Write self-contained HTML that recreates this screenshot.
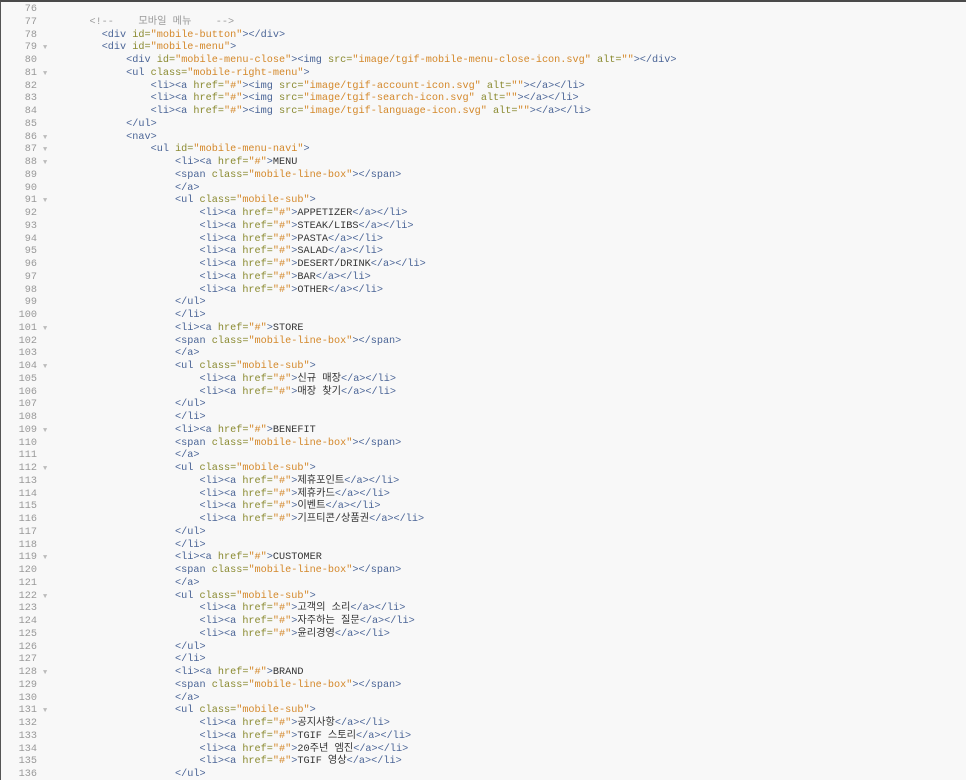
<!DOCTYPE html>
<html><head><meta charset="utf-8"><style>
html,body{margin:0;padding:0;background:#f8f8f8;width:966px;height:780px;overflow:hidden}
body{border-top:2px solid #4a4a4a;border-left:1px solid #555;box-sizing:border-box;position:relative}
.w{position:absolute;left:0;top:2px}
.l{position:relative;height:12.75px;line-height:12.75px;font-family:"Liberation Mono","Noto Sans CJK KR",monospace;font-size:10.2px;white-space:pre;color:#333;overflow:visible}
.n{position:absolute;left:0;width:36px;text-align:right;color:#999}
.f{position:absolute;left:42px;color:#bbb;font-size:7px}
.c{position:absolute;left:64px;top:0;line-height:12.75px}
.t{color:#4a6496}.a{color:#8a8a30}.s{color:#d4882a}.m{color:#9a9a9a}
</style></head><body><div class="w">
<div class="l"><span class="n">76</span></div>
<div class="l"><span class="n">77</span><span class="c m">    &lt;!--    모바일 메뉴    --&gt;</span></div>
<div class="l"><span class="n">78</span><span class="c">      <span class="t">&lt;div</span> <span class="a">id=</span><span class="s">"mobile-button"</span><span class="t">&gt;&lt;/div&gt;</span></span></div>
<div class="l"><span class="n">79</span><span class="f">▼</span><span class="c">      <span class="t">&lt;div</span> <span class="a">id=</span><span class="s">"mobile-menu"</span><span class="t">&gt;</span></span></div>
<div class="l"><span class="n">80</span><span class="c">          <span class="t">&lt;div</span> <span class="a">id=</span><span class="s">"mobile-menu-close"</span><span class="t">&gt;&lt;img</span> <span class="a">src=</span><span class="s">"image/tgif-mobile-menu-close-icon.svg"</span> <span class="a">alt=</span><span class="s">""</span><span class="t">&gt;&lt;/div&gt;</span></span></div>
<div class="l"><span class="n">81</span><span class="f">▼</span><span class="c">          <span class="t">&lt;ul</span> <span class="a">class=</span><span class="s">"mobile-right-menu"</span><span class="t">&gt;</span></span></div>
<div class="l"><span class="n">82</span><span class="c">              <span class="t">&lt;li&gt;&lt;a</span> <span class="a">href=</span><span class="s">"#"</span><span class="t">&gt;&lt;img</span> <span class="a">src=</span><span class="s">"image/tgif-account-icon.svg"</span> <span class="a">alt=</span><span class="s">""</span><span class="t">&gt;&lt;/a&gt;&lt;/li&gt;</span></span></div>
<div class="l"><span class="n">83</span><span class="c">              <span class="t">&lt;li&gt;&lt;a</span> <span class="a">href=</span><span class="s">"#"</span><span class="t">&gt;&lt;img</span> <span class="a">src=</span><span class="s">"image/tgif-search-icon.svg"</span> <span class="a">alt=</span><span class="s">""</span><span class="t">&gt;&lt;/a&gt;&lt;/li&gt;</span></span></div>
<div class="l"><span class="n">84</span><span class="c">              <span class="t">&lt;li&gt;&lt;a</span> <span class="a">href=</span><span class="s">"#"</span><span class="t">&gt;&lt;img</span> <span class="a">src=</span><span class="s">"image/tgif-language-icon.svg"</span> <span class="a">alt=</span><span class="s">""</span><span class="t">&gt;&lt;/a&gt;&lt;/li&gt;</span></span></div>
<div class="l"><span class="n">85</span><span class="c">          <span class="t">&lt;/ul&gt;</span></span></div>
<div class="l"><span class="n">86</span><span class="f">▼</span><span class="c">          <span class="t">&lt;nav&gt;</span></span></div>
<div class="l"><span class="n">87</span><span class="f">▼</span><span class="c">              <span class="t">&lt;ul</span> <span class="a">id=</span><span class="s">"mobile-menu-navi"</span><span class="t">&gt;</span></span></div>
<div class="l"><span class="n">88</span><span class="f">▼</span><span class="c">                  <span class="t">&lt;li&gt;&lt;a</span> <span class="a">href=</span><span class="s">"#"</span><span class="t">&gt;</span>MENU</span></div>
<div class="l"><span class="n">89</span><span class="c">                  <span class="t">&lt;span</span> <span class="a">class=</span><span class="s">"mobile-line-box"</span><span class="t">&gt;&lt;/span&gt;</span></span></div>
<div class="l"><span class="n">90</span><span class="c">                  <span class="t">&lt;/a&gt;</span></span></div>
<div class="l"><span class="n">91</span><span class="f">▼</span><span class="c">                  <span class="t">&lt;ul</span> <span class="a">class=</span><span class="s">"mobile-sub"</span><span class="t">&gt;</span></span></div>
<div class="l"><span class="n">92</span><span class="c">                      <span class="t">&lt;li&gt;&lt;a</span> <span class="a">href=</span><span class="s">"#"</span><span class="t">&gt;</span>APPETIZER<span class="t">&lt;/a&gt;&lt;/li&gt;</span></span></div>
<div class="l"><span class="n">93</span><span class="c">                      <span class="t">&lt;li&gt;&lt;a</span> <span class="a">href=</span><span class="s">"#"</span><span class="t">&gt;</span>STEAK/LIBS<span class="t">&lt;/a&gt;&lt;/li&gt;</span></span></div>
<div class="l"><span class="n">94</span><span class="c">                      <span class="t">&lt;li&gt;&lt;a</span> <span class="a">href=</span><span class="s">"#"</span><span class="t">&gt;</span>PASTA<span class="t">&lt;/a&gt;&lt;/li&gt;</span></span></div>
<div class="l"><span class="n">95</span><span class="c">                      <span class="t">&lt;li&gt;&lt;a</span> <span class="a">href=</span><span class="s">"#"</span><span class="t">&gt;</span>SALAD<span class="t">&lt;/a&gt;&lt;/li&gt;</span></span></div>
<div class="l"><span class="n">96</span><span class="c">                      <span class="t">&lt;li&gt;&lt;a</span> <span class="a">href=</span><span class="s">"#"</span><span class="t">&gt;</span>DESERT/DRINK<span class="t">&lt;/a&gt;&lt;/li&gt;</span></span></div>
<div class="l"><span class="n">97</span><span class="c">                      <span class="t">&lt;li&gt;&lt;a</span> <span class="a">href=</span><span class="s">"#"</span><span class="t">&gt;</span>BAR<span class="t">&lt;/a&gt;&lt;/li&gt;</span></span></div>
<div class="l"><span class="n">98</span><span class="c">                      <span class="t">&lt;li&gt;&lt;a</span> <span class="a">href=</span><span class="s">"#"</span><span class="t">&gt;</span>OTHER<span class="t">&lt;/a&gt;&lt;/li&gt;</span></span></div>
<div class="l"><span class="n">99</span><span class="c">                  <span class="t">&lt;/ul&gt;</span></span></div>
<div class="l"><span class="n">100</span><span class="c">                  <span class="t">&lt;/li&gt;</span></span></div>
<div class="l"><span class="n">101</span><span class="f">▼</span><span class="c">                  <span class="t">&lt;li&gt;&lt;a</span> <span class="a">href=</span><span class="s">"#"</span><span class="t">&gt;</span>STORE</span></div>
<div class="l"><span class="n">102</span><span class="c">                  <span class="t">&lt;span</span> <span class="a">class=</span><span class="s">"mobile-line-box"</span><span class="t">&gt;&lt;/span&gt;</span></span></div>
<div class="l"><span class="n">103</span><span class="c">                  <span class="t">&lt;/a&gt;</span></span></div>
<div class="l"><span class="n">104</span><span class="f">▼</span><span class="c">                  <span class="t">&lt;ul</span> <span class="a">class=</span><span class="s">"mobile-sub"</span><span class="t">&gt;</span></span></div>
<div class="l"><span class="n">105</span><span class="c">                      <span class="t">&lt;li&gt;&lt;a</span> <span class="a">href=</span><span class="s">"#"</span><span class="t">&gt;</span>신규 매장<span class="t">&lt;/a&gt;&lt;/li&gt;</span></span></div>
<div class="l"><span class="n">106</span><span class="c">                      <span class="t">&lt;li&gt;&lt;a</span> <span class="a">href=</span><span class="s">"#"</span><span class="t">&gt;</span>매장 찾기<span class="t">&lt;/a&gt;&lt;/li&gt;</span></span></div>
<div class="l"><span class="n">107</span><span class="c">                  <span class="t">&lt;/ul&gt;</span></span></div>
<div class="l"><span class="n">108</span><span class="c">                  <span class="t">&lt;/li&gt;</span></span></div>
<div class="l"><span class="n">109</span><span class="f">▼</span><span class="c">                  <span class="t">&lt;li&gt;&lt;a</span> <span class="a">href=</span><span class="s">"#"</span><span class="t">&gt;</span>BENEFIT</span></div>
<div class="l"><span class="n">110</span><span class="c">                  <span class="t">&lt;span</span> <span class="a">class=</span><span class="s">"mobile-line-box"</span><span class="t">&gt;&lt;/span&gt;</span></span></div>
<div class="l"><span class="n">111</span><span class="c">                  <span class="t">&lt;/a&gt;</span></span></div>
<div class="l"><span class="n">112</span><span class="f">▼</span><span class="c">                  <span class="t">&lt;ul</span> <span class="a">class=</span><span class="s">"mobile-sub"</span><span class="t">&gt;</span></span></div>
<div class="l"><span class="n">113</span><span class="c">                      <span class="t">&lt;li&gt;&lt;a</span> <span class="a">href=</span><span class="s">"#"</span><span class="t">&gt;</span>제휴포인트<span class="t">&lt;/a&gt;&lt;/li&gt;</span></span></div>
<div class="l"><span class="n">114</span><span class="c">                      <span class="t">&lt;li&gt;&lt;a</span> <span class="a">href=</span><span class="s">"#"</span><span class="t">&gt;</span>제휴카드<span class="t">&lt;/a&gt;&lt;/li&gt;</span></span></div>
<div class="l"><span class="n">115</span><span class="c">                      <span class="t">&lt;li&gt;&lt;a</span> <span class="a">href=</span><span class="s">"#"</span><span class="t">&gt;</span>이벤트<span class="t">&lt;/a&gt;&lt;/li&gt;</span></span></div>
<div class="l"><span class="n">116</span><span class="c">                      <span class="t">&lt;li&gt;&lt;a</span> <span class="a">href=</span><span class="s">"#"</span><span class="t">&gt;</span>기프티콘/상품권<span class="t">&lt;/a&gt;&lt;/li&gt;</span></span></div>
<div class="l"><span class="n">117</span><span class="c">                  <span class="t">&lt;/ul&gt;</span></span></div>
<div class="l"><span class="n">118</span><span class="c">                  <span class="t">&lt;/li&gt;</span></span></div>
<div class="l"><span class="n">119</span><span class="f">▼</span><span class="c">                  <span class="t">&lt;li&gt;&lt;a</span> <span class="a">href=</span><span class="s">"#"</span><span class="t">&gt;</span>CUSTOMER</span></div>
<div class="l"><span class="n">120</span><span class="c">                  <span class="t">&lt;span</span> <span class="a">class=</span><span class="s">"mobile-line-box"</span><span class="t">&gt;&lt;/span&gt;</span></span></div>
<div class="l"><span class="n">121</span><span class="c">                  <span class="t">&lt;/a&gt;</span></span></div>
<div class="l"><span class="n">122</span><span class="f">▼</span><span class="c">                  <span class="t">&lt;ul</span> <span class="a">class=</span><span class="s">"mobile-sub"</span><span class="t">&gt;</span></span></div>
<div class="l"><span class="n">123</span><span class="c">                      <span class="t">&lt;li&gt;&lt;a</span> <span class="a">href=</span><span class="s">"#"</span><span class="t">&gt;</span>고객의 소리<span class="t">&lt;/a&gt;&lt;/li&gt;</span></span></div>
<div class="l"><span class="n">124</span><span class="c">                      <span class="t">&lt;li&gt;&lt;a</span> <span class="a">href=</span><span class="s">"#"</span><span class="t">&gt;</span>자주하는 질문<span class="t">&lt;/a&gt;&lt;/li&gt;</span></span></div>
<div class="l"><span class="n">125</span><span class="c">                      <span class="t">&lt;li&gt;&lt;a</span> <span class="a">href=</span><span class="s">"#"</span><span class="t">&gt;</span>윤리경영<span class="t">&lt;/a&gt;&lt;/li&gt;</span></span></div>
<div class="l"><span class="n">126</span><span class="c">                  <span class="t">&lt;/ul&gt;</span></span></div>
<div class="l"><span class="n">127</span><span class="c">                  <span class="t">&lt;/li&gt;</span></span></div>
<div class="l"><span class="n">128</span><span class="f">▼</span><span class="c">                  <span class="t">&lt;li&gt;&lt;a</span> <span class="a">href=</span><span class="s">"#"</span><span class="t">&gt;</span>BRAND</span></div>
<div class="l"><span class="n">129</span><span class="c">                  <span class="t">&lt;span</span> <span class="a">class=</span><span class="s">"mobile-line-box"</span><span class="t">&gt;&lt;/span&gt;</span></span></div>
<div class="l"><span class="n">130</span><span class="c">                  <span class="t">&lt;/a&gt;</span></span></div>
<div class="l"><span class="n">131</span><span class="f">▼</span><span class="c">                  <span class="t">&lt;ul</span> <span class="a">class=</span><span class="s">"mobile-sub"</span><span class="t">&gt;</span></span></div>
<div class="l"><span class="n">132</span><span class="c">                      <span class="t">&lt;li&gt;&lt;a</span> <span class="a">href=</span><span class="s">"#"</span><span class="t">&gt;</span>공지사항<span class="t">&lt;/a&gt;&lt;/li&gt;</span></span></div>
<div class="l"><span class="n">133</span><span class="c">                      <span class="t">&lt;li&gt;&lt;a</span> <span class="a">href=</span><span class="s">"#"</span><span class="t">&gt;</span>TGIF 스토리<span class="t">&lt;/a&gt;&lt;/li&gt;</span></span></div>
<div class="l"><span class="n">134</span><span class="c">                      <span class="t">&lt;li&gt;&lt;a</span> <span class="a">href=</span><span class="s">"#"</span><span class="t">&gt;</span>20주년 엠진<span class="t">&lt;/a&gt;&lt;/li&gt;</span></span></div>
<div class="l"><span class="n">135</span><span class="c">                      <span class="t">&lt;li&gt;&lt;a</span> <span class="a">href=</span><span class="s">"#"</span><span class="t">&gt;</span>TGIF 영상<span class="t">&lt;/a&gt;&lt;/li&gt;</span></span></div>
<div class="l"><span class="n">136</span><span class="c">                  <span class="t">&lt;/ul&gt;</span></span></div>
</div></body></html>
